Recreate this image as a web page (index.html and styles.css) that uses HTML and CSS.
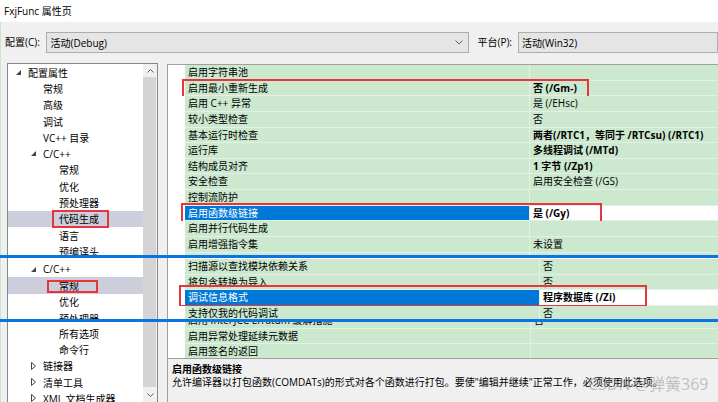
FILE: index.html
```html
<!DOCTYPE html>
<html lang="zh-CN">
<head>
<meta charset="utf-8">
<title>FxjFunc 属性页</title>
<link rel="stylesheet" href="styles.css">
</head>
<body>
<div class="titlebar">FxjFunc 属性页</div>
<div class="config">
  <span class="lbl lbl-cfg">配置(C):</span>
  <div class="combo combo-cfg"><span>活动(Debug)</span><svg class="chev" width="8" height="5" viewBox="0 0 8 5"><polyline points="0.5,0.5 4,4 7.5,0.5" fill="none" stroke="#606060" stroke-width="1"/></svg></div>
  <span class="lbl lbl-plat">平台(P):</span>
  <div class="combo combo-plat"><span>活动(Win32)</span></div>
</div>

<div class="band b1">
  <div class="tree">
    <div class="tree-rows">
      <div class="tr lv0t"><span class="tg"><svg width="5" height="5" viewBox="0 0 5 5"><polygon points="5,0 5,5 0,5" fill="#444"/></svg></span>配置属性</div>
      <div class="tr lv1">常规</div>
      <div class="tr lv1">高级</div>
      <div class="tr lv1">调试</div>
      <div class="tr lv1">VC++ 目录</div>
      <div class="tr lv1t"><span class="tg"><svg width="5" height="5" viewBox="0 0 5 5"><polygon points="5,0 5,5 0,5" fill="#444"/></svg></span>C/C++</div>
      <div class="tr lv2">常规</div>
      <div class="tr lv2">优化</div>
      <div class="tr lv2">预处理器</div>
      <div class="tr lv2 tsel">代码生成<span class="redbox rb-t1"></span></div>
      <div class="tr lv2">语言</div>
      <div class="tr lv2">预编译头</div>
    </div>
    <div class="sb">
      <div class="sb-arrow"><svg width="7" height="4" viewBox="0 0 7 4"><polyline points="0.5,3.5 3.5,0.5 6.5,3.5" fill="none" stroke="#606060" stroke-width="1"/></svg></div>
      <div class="thumb"></div>
    </div>
  </div>
  <div class="grid grid-b1">
    <div class="row"><div class="gut"></div><div class="nm">启用字符串池</div><div class="vl"></div></div>
    <div class="row"><div class="gut"></div><div class="nm">启用最小重新生成</div><div class="vl b">否 (/Gm-)</div><span class="redbox rb-g1"></span></div>
    <div class="row"><div class="gut"></div><div class="nm">启用 C++ 异常</div><div class="vl">是 (/EHsc)</div></div>
    <div class="row"><div class="gut"></div><div class="nm">较小类型检查</div><div class="vl">否</div></div>
    <div class="row"><div class="gut"></div><div class="nm">基本运行时检查</div><div class="vl b">两者(/RTC1，等同于 /RTCsu) (/RTC1)</div></div>
    <div class="row"><div class="gut"></div><div class="nm">运行库</div><div class="vl b">多线程调试 (/MTd)</div></div>
    <div class="row"><div class="gut"></div><div class="nm">结构成员对齐</div><div class="vl b">1 字节 (/Zp1)</div></div>
    <div class="row"><div class="gut"></div><div class="nm">安全检查</div><div class="vl">启用安全检查 (/GS)</div></div>
    <div class="row"><div class="gut"></div><div class="nm">控制流防护</div><div class="vl"></div></div>
    <div class="row gsel"><div class="gut"></div><div class="nm">启用函数级链接</div><div class="vl b">是 (/Gy)</div><span class="redbox rb-g2"></span></div>
    <div class="row"><div class="gut"></div><div class="nm">启用并行代码生成</div><div class="vl"></div></div>
    <div class="row"><div class="gut"></div><div class="nm">启用增强指令集</div><div class="vl">未设置</div></div>
    <div class="row"><div class="gut"></div><div class="nm"></div><div class="vl"></div></div>
  </div>
</div>

<div class="blue"></div>

<div class="band b2">
  <div class="tree">
    <div class="tree-rows pad3">
      <div class="tr lv1t"><span class="tg"><svg width="5" height="5" viewBox="0 0 5 5"><polygon points="5,0 5,5 0,5" fill="#444"/></svg></span>C/C++</div>
      <div class="tr lv2 tsel">常规<span class="redbox rb-t2"></span></div>
      <div class="tr lv2">优化</div>
      <div class="tr lv2">预处理器</div>
    </div>
    <div class="sb"><div class="thumb"></div></div>
  </div>
  <div class="grid grid-b2">
    <div class="rows pad1">
      <div class="row"><div class="gut"></div><div class="nm">扫描源以查找模块依赖关系</div><div class="vl">否</div></div>
      <div class="row"><div class="gut"></div><div class="nm">将包含转换为导入</div><div class="vl">否</div></div>
      <div class="row gsel"><div class="gut"></div><div class="nm">调试信息格式</div><div class="vl b">程序数据库 (/Zi)</div><span class="redbox rb-g3"></span></div>
      <div class="row"><div class="gut"></div><div class="nm">支持仅我的代码调试</div><div class="vl">否</div></div>
    </div>
  </div>
</div>

<div class="blue"></div>

<div class="band b3">
  <div class="tree">
    <div class="tree-rows pad3">
      <div class="tr lv2">所有选项</div>
      <div class="tr lv2">命令行</div>
      <div class="tr lv1t"><span class="tg"><svg width="5" height="8" viewBox="0 0 5 8"><polygon points="0.5,0.5 4.5,4 0.5,7.5" fill="none" stroke="#444" stroke-width="1"/></svg></span>链接器</div>
      <div class="tr lv1t"><span class="tg"><svg width="5" height="8" viewBox="0 0 5 8"><polygon points="0.5,0.5 4.5,4 0.5,7.5" fill="none" stroke="#444" stroke-width="1"/></svg></span>清单工具</div>
      <div class="tr lv1t"><span class="tg"><svg width="5" height="8" viewBox="0 0 5 8"><polygon points="0.5,0.5 4.5,4 0.5,7.5" fill="none" stroke="#444" stroke-width="1"/></svg></span>XML 文档生成器</div>
    </div>
    <div class="sb">
      <div class="thumb"></div>
      <div class="sb-arrow sb-down"><svg width="7" height="4" viewBox="0 0 7 4"><polyline points="0.5,0.5 3.5,3.5 6.5,0.5" fill="none" stroke="#606060" stroke-width="1"/></svg></div>
    </div>
  </div>
  <div class="right3">
    <div class="grid grid-b3">
      <div class="rows shift">
        <div class="row"><div class="gut"></div><div class="nm">启用 Intel JCC Erratum 缓解措施</div><div class="vl">否</div></div>
        <div class="row"><div class="gut"></div><div class="nm">启用异常处理延续元数据</div><div class="vl"></div></div>
        <div class="row"><div class="gut"></div><div class="nm">启用签名的返回</div><div class="vl"></div></div>
      </div>
    </div>
    <div class="desc">
      <div class="desc-title">启用函数级链接</div>
      <div class="desc-text">允许编译器以打包函数(COMDATs)的形式对各个函数进行打包。要使"编辑并继续"正常工作，必须使用此选项。</div>
      <span class="watermark">CSDN @弹簧369</span>
    </div>
  </div>
</div>
</body>
</html>
```

FILE: styles.css
```css
* { box-sizing: border-box; }
html, body { margin: 0; padding: 0; }
body {
  width: 718px;
  height: 402px;
  overflow: hidden;
  background: #f0f0f0;
  font-family: "Open Sans", "Noto Sans CJK SC", "Microsoft YaHei", sans-serif;
  font-size: 10px;
  color: #000;
  box-shadow: inset 1px 0 #c9e6c9;
}

.titlebar {
  height: 22px;
  line-height: 22px;
  background: #fff;
  padding-left: 4px;
}

.config {
  height: 41px;
  display: flex;
  align-items: flex-start;
  padding-top: 10px;
  padding-left: 5px;
  white-space: nowrap;
}
.lbl { line-height: 21px; }
.lbl-cfg { width: 46px; }
.lbl-plat { width: 45px; margin-left: 8px; }
.combo {
  height: 21px;
  background: #e5e5e5;
  border: 1px solid #adadad;
  display: flex;
  align-items: center;
  justify-content: space-between;
  padding-left: 3px;
  flex-shrink: 0;
}
.combo-cfg { width: 423px; padding-right: 5px; }
.combo-plat { width: 200px; }

.band { display: flex; overflow: hidden; }
.b1 { height: 192px; }
.b2 { height: 61px; }
.b3 { height: 80px; }
.blue { height: 3px; background: #0b74e5; }

.tree {
  width: 151px;
  margin-left: 7px;
  flex-shrink: 0;
  display: flex;
  background: #fff;
  border-left: 1px solid #828790;
  border-right: 1px solid #828790;
}
.b1 .tree { border-top: 1px solid #828790; }
.tree-rows { width: 135px; overflow: hidden; }
.pad3 { padding-top: 3px; }
.tr {
  position: relative;
  height: 16.3px;
  display: flex;
  align-items: center;
  white-space: nowrap;
}
.lv0t { padding-left: 8px; }
.lv1 { padding-left: 35px; }
.lv1t { padding-left: 23px; }
.lv2 { padding-left: 51px; }
.tg { width: 12px; display: inline-flex; align-items: center; }
.tsel { background: #cccedb; }

.sb {
  width: 14px;
  background: #f0f0f0;
  display: flex;
  flex-direction: column;
}
.sb-arrow {
  height: 13px;
  display: flex;
  align-items: center;
  justify-content: center;
  flex-shrink: 0;
}
.sb-down { height: 15px; }
.thumb { flex: 1; background: #d4d4d4; margin-right: 1px; }

.grid {
  flex: 1;
  margin-left: 9px;
  background: #fff;
  border-left: 1px solid #a0a0a0;
  overflow: hidden;
}
.grid-b1 { margin-top: 1px; border-top: 1px solid #a0a0a0; }
.pad1 { padding-top: 1px; }
.shift { margin-top: -9px; }

.row {
  position: relative;
  height: 15.64px;
  display: flex;
  white-space: nowrap;
}
.gut { width: 17px; flex-shrink: 0; background: #fff; }
.nm, .vl {
  background: #cce8cf;
  border-bottom: 1px solid #e3f1e4;
  padding-left: 3px;
  line-height: 14.6px;
  overflow: hidden;
}
.nm { width: 345px; flex-shrink: 0; border-right: 1px solid #e3f1e4; }
.vl { flex: 1; }
.grid-b2 .nm { width: 355px; }
.grid-b3 .nm { width: 346px; }
.b { font-weight: bold; }
.gsel .nm { background: #0078d7; color: #fff; }
.gsel .vl { background: #fff; }

.redbox {
  position: absolute;
  border: 2px solid #e8343a;
  pointer-events: none;
}
.rb-t1 { left: 44px; top: -1px; width: 57px; height: 18px; }
.rb-t2 { left: 39px; top: 3px; width: 51px; height: 13px; }
.rb-g1 { left: 14px; top: -2px; width: 407px; height: 19px; }
.rb-g2 { left: 13px; top: -3px; width: 421px; height: 21px; }
.rb-g3 { left: 11px; top: -5px; width: 468px; height: 22px; }

.right3 {
  flex: 1;
  margin-left: 9px;
  display: flex;
  flex-direction: column;
}
.right3 .grid { margin-left: 0; height: 36px; flex: none; }
.desc {
  position: relative;
  flex: 1;
  border-top: 1px solid #a0a0a0;
  border-left: 1px solid #a0a0a0;
  padding: 4px 0 0 4px;
  line-height: 13px;
  white-space: nowrap;
  overflow: hidden;
}
.desc-title { font-weight: bold; }
.watermark {
  position: absolute;
  left: 420px;
  top: 16px;
  font-size: 16px;
  line-height: 19px;
  color: rgba(150, 150, 150, 0.55);
}
```
